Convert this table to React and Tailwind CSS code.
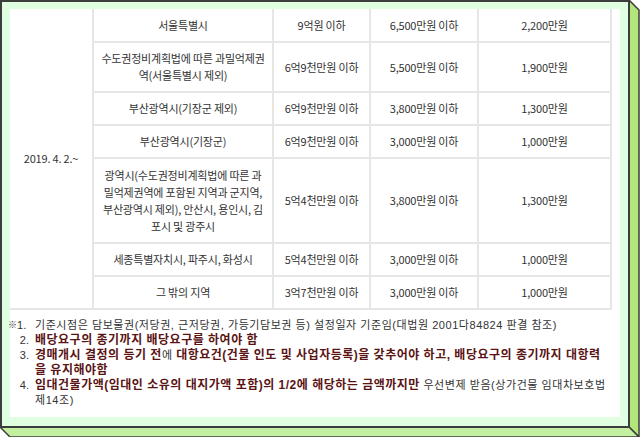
import React from "react";

const rows = [
  { h: "h-[33px]", area: ["서울특별시"], a: "9억원 이하", b: "6,500만원 이하", c: "2,200만원" },
  { h: "h-[50px]", area: ["수도권정비계획법에 따른 과밀억제권", "역(서울특별시 제외)"], a: "6억9천만원 이하", b: "5,500만원 이하", c: "1,900만원" },
  { h: "h-[33px]", area: ["부산광역시(기장군 제외)"], a: "6억9천만원 이하", b: "3,800만원 이하", c: "1,300만원" },
  { h: "h-[33px]", area: ["부산광역시(기장군)"], a: "6억9천만원 이하", b: "3,000만원 이하", c: "1,000만원" },
  {
    h: "h-[85px]",
    area: ["광역시(수도권정비계획법에 따른 과", "밀억제권역에 포함된 지역과 군지역,", "부산광역시 제외), 안산시, 용인시, 김", "포시 및 광주시"],
    a: "5억4천만원 이하",
    b: "3,800만원 이하",
    c: "1,300만원",
  },
  { h: "h-[33px]", area: ["세종특별자치시, 파주시, 화성시"], a: "5억4천만원 이하", b: "3,000만원 이하", c: "1,000만원" },
  { h: "h-[33px]", area: ["그 밖의 지역"], a: "3억7천만원 이하", b: "3,000만원 이하", c: "1,000만원" },
];

const cell = "border-2 border-[#e6e6e6] text-center align-middle p-0";
const bold = "font-bold text-[12px] tracking-[0.5px] text-[#5a1414]";

function Frame() {
  return (
    <svg className="absolute inset-0" width="640" height="437" viewBox="0 0 640 437">
      <polygon points="629,0 639,10 639,437 629,427" fill="#b2e67c" stroke="#3d3d3d" strokeWidth="1.5" />
      <polygon points="0,427 629,427 639,437 10,437" fill="#c3f0a0" stroke="#3d3d3d" strokeWidth="1.5" />
    </svg>
  );
}

export default function App() {
  return (
    <div
      className="relative w-[640px] h-[437px] bg-white text-[#333] overflow-hidden"
      style={{ fontFamily: '"Noto Sans CJK KR", "Noto Sans", sans-serif' }}
    >
      <Frame />
      <div className="relative w-[630px] h-[428px] border-2 border-[#3d3d3d] bg-[#e0fee0] pl-[8px] pt-[7px] pr-[8px] pb-[9px]">
        <div className="w-full h-full bg-white">
          {/* 표 */}
          <table className="w-[601px] border-collapse table-fixed text-[11px] leading-[17px] tracking-[-0.2px]">
            <colgroup>
              <col className="w-[83px]" />
              <col className="w-[180px]" />
              <col className="w-[97px]" />
              <col className="w-[108px]" />
              <col className="w-[133px]" />
            </colgroup>
            <tbody>
              {rows.map((r, i) => (
                <tr key={i} className={r.h}>
                  {i === 0 && (
                    <td rowSpan={rows.length} className={cell + " border-l-0 border-t-0"}>
                      2019. 4. 2.~
                    </td>
                  )}
                  <td className={cell + (i === 0 ? " border-t-0" : "")}>
                    {r.area.map((line, j) => (
                      <div key={j} className="whitespace-nowrap">{line}</div>
                    ))}
                  </td>
                  <td className={cell + (i === 0 ? " border-t-0" : "")}>{r.a}</td>
                  <td className={cell + (i === 0 ? " border-t-0" : "")}>{r.b}</td>
                  <td className={cell + (i === 0 ? " border-t-0" : "")}>{r.c}</td>
                </tr>
              ))}
            </tbody>
          </table>

          {/* 주석 */}
          <div
            className="mt-[8px] -ml-[2px] text-[11px] leading-[15px] tracking-[0.55px]"
            style={{ fontFamily: '"Liberation Sans", "Noto Sans CJK KR", sans-serif' }}
          >
            <div className="flex">
              <div className="w-[27px] shrink-0 flex justify-between items-center pr-[10px] tracking-normal">
                <span className="text-[9px]">※</span>
                <span>1.</span>
              </div>
              <div className="whitespace-nowrap">
                기준시점은 담보물권(저당권, 근저당권, 가등기담보권 등) 설정일자 기준임(대법원 2001다84824 판결 참조)
              </div>
            </div>
            <div className="flex">
              <div className="w-[27px] shrink-0 text-right pr-[6px] tracking-normal">2.</div>
              <div className={"whitespace-nowrap " + bold}>배당요구의 종기까지 배당요구를 하여야 함</div>
            </div>
            <div className="flex">
              <div className="w-[27px] shrink-0 text-right pr-[6px] tracking-normal">3.</div>
              <div>
                <div className="whitespace-nowrap">
                  <span className={bold}>경매개시 결정의 등기 전</span>
                  <span>에 </span>
                  <span className={bold}>
                    대항요건(건물 인도 및 사업자등록)을 갖추어야 하고, 배당요구의 종기까지 대항력
                  </span>
                </div>
                <div className={bold}>을 유지해야함</div>
              </div>
            </div>
            <div className="flex">
              <div className="w-[27px] shrink-0 text-right pr-[6px] tracking-normal">4.</div>
              <div>
                <div className="whitespace-nowrap">
                  <span className={bold}>
                    임대건물가액(임대인 소유의 대지가액 포함)의 1/2에 해당하는 금액까지만
                  </span>{" "}
                  우선변제 받음(상가건물 임대차보호법
                </div>
                <div>제14조)</div>
              </div>
            </div>
          </div>
        </div>
      </div>
    </div>
  );
}
